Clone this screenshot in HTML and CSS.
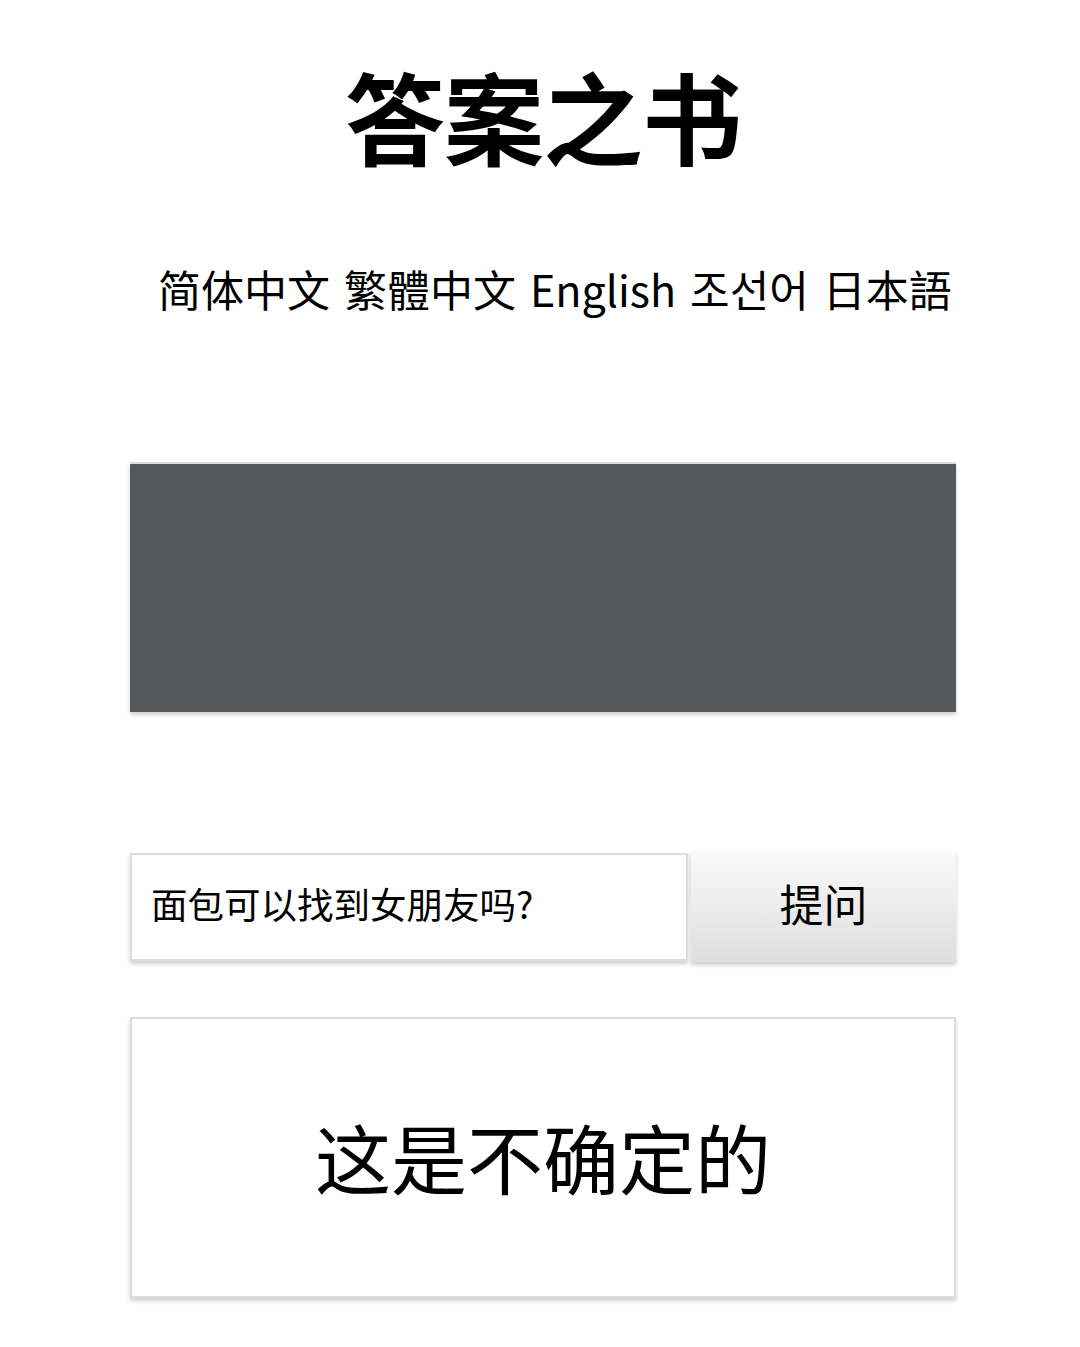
FILE: index.html
```html
<html>
<head>
    <meta charset="utf-8">
    <link rel="stylesheet" href="styles.css">
</head>
<body>
<div class="container">
    <h1 class="title">答案之书</h1>
    <div id="langs">
        <a href="?zh-cn">简体中文</a>
        <a href="?zh-tw">繁體中文</a>
        <a href="?en">English</a>
        <a href="?ko">조선어</a>
        <a href="?ja">日本語</a>
    </div>
    <div class="book panel"></div>
    <div class="ask">
        <input class="question panel" type="text" value="面包可以找到女朋友吗?">
        <button class="ask-btn">提问</button>
    </div>
    <div class="answer panel">这是不确定的</div>
</div>
</body>
</html>
```

FILE: styles.css
```css
body{
    margin: 0;
    background-color: #fff;
    color: #000;
    font-family: "Noto Sans CJK SC", "Noto Sans", sans-serif;
}

.container{
    width: 826px;
    margin: 0 124px 0 130px;
    display: flex;
    flex-direction: column;
}

.panel{
    border: 2px solid #dcdcdc;
    box-shadow: 0 3px 4px rgba(0, 0, 0, 0.18);
    box-sizing: border-box;
}

.title{
    margin: 50px 0 0 0;
    text-align: center;
    font-size: 100px;
    font-weight: bold;
    line-height: 130px;
    letter-spacing: -1px;
}

#langs{
    margin: 78px 0 0 0;
    padding-left: 28px;
    display: flex;
    gap: 14px;
    font-size: 43px;
    line-height: 60px;
}

#langs a{
    color: #000;
    text-decoration: none;
}

.book{
    margin-top: 144px;
    height: 250px;
    background-color: #56595c;
    border-bottom: none;
    border-left: none;
    border-right: none;
}

.ask{
    margin-top: 139px;
    display: flex;
    gap: 3px;
    align-items: center;
}

.question{
    width: 558px;
    height: 108px;
    padding: 0 0 6px 19px;
    font-family: "Noto Sans CJK SC", sans-serif;
    font-size: 36.5px;
    color: #000;
    outline: none;
    background: #fff;
}

.ask-btn{
    flex: 1;
    height: 111px;
    padding-bottom: 8px;
    border: none;
    background: linear-gradient(#fafafa, #dedede);
    box-shadow: 0 3px 4px rgba(0, 0, 0, 0.2);
    font-family: "Noto Sans CJK SC", sans-serif;
    font-size: 44px;
    color: #000;
}

.answer{
    margin-top: 55px;
    height: 281px;
    display: flex;
    align-items: center;
    justify-content: center;
    font-size: 76px;
    padding-bottom: 4px;
}
```
